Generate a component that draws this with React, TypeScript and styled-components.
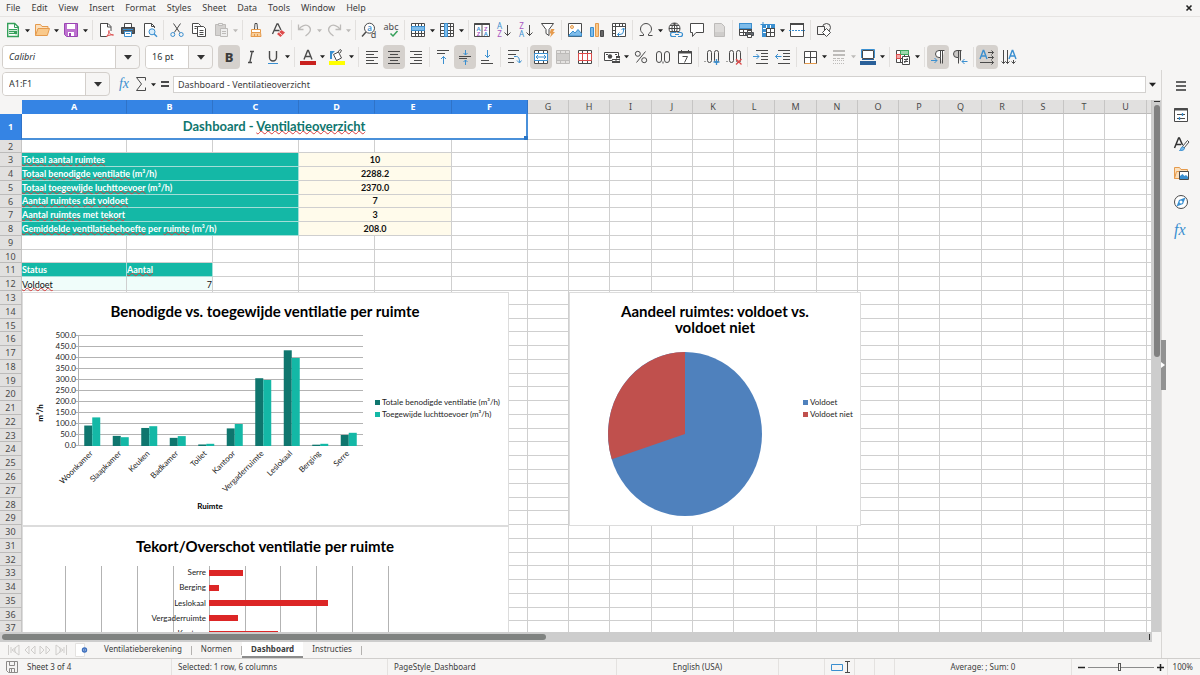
import React from "react";
import styled, { createGlobalStyle, css } from "styled-components";

const ink = "#4a4a4a";
const blue = "#3a8fd0";
const mute = "#bdbbb9";
const orange = "#e59a4c";
const red = "#dd4b4b";
const green = "#35a05a";
const purple = "#a855c0";
const uiFont = '"Noto Sans", "Open Sans", sans-serif';
const cellFont = 'Lato, "Noto Sans", sans-serif';

const GlobalStyle = createGlobalStyle`
  * { box-sizing: border-box; }
  body { margin: 0; background: #f6f5f4; color: #3c3c3c; font: 9px/12px ${uiFont}; }
  button, input { font: inherit; color: inherit; margin: 0; }
  button { border: 0; padding: 0; background: none; }
`;

/* ---------- icons ---------- */

const lines = (color: string, rows: number[][]) => (
  <path stroke={color} d={rows.map(([x, y, w]) => `M${x} ${y}.5h${w}`).join("")} />
);

const tableGrid = (color: string) => (
  <path stroke={color} d="M1.5 1.5h13v13h-13zM1.5 4.5h13M1.5 8.5h13M1.5 11.5h13M5.5 1.5v13M8.5 1.5v13M11.5 1.5v13" />
);

const glyph = (x: number, y: number, size: number, fill: string, char: string, weight = 400) => (
  <text x={x} y={y} fontSize={size} fill={fill} stroke="none" fontWeight={weight} textAnchor="middle" fontFamily="Noto Sans, sans-serif">
    {char}
  </text>
);

const icons: Record<string, React.ReactNode> = {
  new: (
    <>
      <path stroke={green} strokeWidth="1.4" fill="#fff" d="M2.7 1.5h7l3.6 3.6v9.4H2.7z" />
      <path stroke={green} d="M9.5 1.5v4h4" />
      <path fill={green} stroke="none" d="M4 7h8v5H4z" />
      <path stroke="#cdebd6" d="M4 8.5h8M4 10.5h5M10 12.5h2" />
    </>
  ),
  open: (
    <>
      <path stroke={orange} fill="#fbe0bd" d="M1.5 13.5v-11h5l1.5 2h6v3" />
      <path stroke={orange} fill="#f9c98b" d="M1.5 13.5l2.5-7h11.5l-2.2 7z" />
    </>
  ),
  save: (
    <>
      <path stroke="#9a44b3" fill="#bd72cf" d="M1.5 1.5h13v13h-11l-2-2z" />
      <path stroke="none" fill="#fff" d="M4 2h8v5H4zM5 10h6v4H5z" />
      <path stroke="none" fill="#9a44b3" d="M6 11h2v3H6z" />
    </>
  ),
  pdf: (
    <>
      <path stroke={ink} fill="#fff" d="M13 9V4.5l-3-3H2.5v13H9" />
      <path stroke={ink} d="M9.5 1.5v3.5h3.5" />
      <path stroke={red} d="M8.5 14.5c2-2 3-4.5 2.5-6-1.2 1 1 4.5 4.5 4.5-2-.6-5 .2-7 1.5z" />
    </>
  ),
  print: (
    <>
      <path stroke={ink} fill="#fff" d="M4.5 5V1.5h7V5" />
      <path stroke="#3f4347" fill="#53585d" d="M1.5 5.5h13v6h-13z" />
      <path stroke={blue} fill="#fff" d="M4.5 9.5h7v5h-7z" />
      <path stroke={blue} d="M6 11.5h4M3 7.5h10" />
    </>
  ),
  preview: (
    <>
      <path stroke={ink} fill="#fff" d="M12.5 6V4.5l-3-3h-7v13h5" />
      <path stroke={ink} d="M9.5 1.5v3h3" />
      <circle cx="10" cy="9.8" r="3" stroke={blue} fill="#d8ecfa" />
      <path stroke={blue} strokeWidth="1.4" d="M12.2 12l2.8 2.8" />
    </>
  ),
  cut: (
    <>
      <path stroke={ink} d="M4.5 1.5l6.2 9M11.5 1.5l-6.2 9" />
      <circle cx="3.8" cy="12.5" r="2" stroke={blue} />
      <circle cx="12.2" cy="12.5" r="2" stroke={blue} />
    </>
  ),
  copy: (
    <>
      <path stroke={ink} fill="#fff" d="M1.5 1.5h6l2 2v8h-8z" />
      <path stroke={ink} fill="#fff" d="M6.5 4.5h6l2 2v8h-8z" />
      <path stroke={ink} d="M8.5 8.5h4M8.5 10.5h4M8.5 12.5h4M3.5 4.5h3M3.5 6.5h2" />
    </>
  ),
  paste: (
    <>
      <path stroke={mute} fill="#d4d2d0" d="M2.5 2.5h10v11h-10z" />
      <path stroke={mute} fill="#eee" d="M5.5 1.5h4v2h-4zM7.5 6.5h7v8h-7z" />
      <path stroke={mute} d="M9 9.5h4M9 11.5h4" />
    </>
  ),
  clone: (
    <>
      <path stroke={ink} fill="#fff" d="M7 1.5h2l.5 6h-3z" />
      <path stroke={orange} fill="#fff" d="M3.5 7.5h9v3h-9z" />
      <path stroke={orange} fill="#f8cf9c" d="M3.5 10.5h9l.5 4h-10z" />
      <path stroke={orange} d="M6.5 12v2M9.5 12v2" />
    </>
  ),
  clear: (
    <>
      <path stroke={ink} strokeWidth="1.3" d="M2.5 12L7 2h1l3 6M4.500 8.500h5" />
      <path stroke="none" fill={red} d="M7 12l4.500-4 3.500 2.500-4.500 4.500z" />
      <path stroke="#fff" strokeWidth=".8" d="M9 10.300l3.300 2.800" />
    </>
  ),
  undo: <path stroke={mute} strokeWidth="1.3" d="M1.5 2.5v5h5M2 7.2C4 4 9 1.5 12 4.5s1 6.5-3.500 9.500" />,
  redo: <path stroke={mute} strokeWidth="1.3" d="M14.5 2.5v5h-5M14 7.2C12 4 7 1.5 4 4.5s-1 6.500 3.500 9.500" />,
  find: (
    <>
      <circle cx="8.5" cy="6.2" r="5" stroke={ink} fill="#fff" />
      <path stroke={ink} strokeWidth="1.4" d="M5 10l-4 4.5" />
      {glyph(8.5, 9, 8, blue, "a", 600)}
      {glyph(12.5, 15.5, 9, ink, "d")}
    </>
  ),
  spell: (
    <>
      {glyph(8, 8, 9, ink, "abc")}
      <path stroke={green} strokeWidth="1.5" d="M7.5 11.5l2.500 2.500 4.500-5" />
    </>
  ),
  rows: (
    <>
      <path fill="#fff" stroke="none" d="M1 1h14v14H1z" />
      {tableGrid(ink)}
      <path fill="#7ebcea" stroke={blue} d="M1.5 4.5h13v4h-13z" />
    </>
  ),
  cols: (
    <>
      <path fill="#fff" stroke="none" d="M1 1h14v14H1z" />
      {tableGrid(ink)}
      <path fill="#7ebcea" stroke={blue} d="M5.5 1.5h3v13h-3z" />
    </>
  ),
  sort: (
    <>
      <path stroke={ink} fill="#fff" d="M.5 1.5h15v13H.5zM8 3v12" />
      <path stroke={ink} strokeWidth="2" d="M.5 2h15" />
      {glyph(4.5, 8.6, 6, blue, "A", 600)}
      {glyph(4.5, 14, 6, purple, "Z", 600)}
      {glyph(11.8, 8.6, 6, purple, "Z", 600)}
      {glyph(11.8, 14, 6, blue, "A", 600)}
    </>
  ),
  asc: (
    <>
      {glyph(3.5, 7, 8, blue, "A")}
      {glyph(3.5, 15, 8, purple, "Z")}
      <path stroke={ink} d="M11.5 3v10.5M8.5 10.5l3 3 3-3" />
    </>
  ),
  desc: (
    <>
      {glyph(3.5, 7, 8, purple, "Z")}
      {glyph(3.5, 15, 8, blue, "A")}
      <path stroke={ink} d="M11.5 3v10.5M8.5 10.5l3 3 3-3" />
    </>
  ),
  filter: (
    <>
      <path stroke={ink} fill="#fff" d="M1.5 1.5h12l-4.500 6v6l-3-2v-4z" />
      <path stroke="none" fill={orange} d="M11 7h3.5l-1.5 3h2l-5 5.5 1.2-4H9.5z" />
    </>
  ),
  image: (
    <>
      <path stroke={ink} fill="#fff" d="M1.5 1.5h13v13h-13z" />
      <path stroke={blue} fill="#7ebcea" d="M2 13l4-4 2 2 3-3.500 3.500 4V14H2z" />
      <circle cx="5" cy="5" r="1.5" stroke={orange} fill="#fbe0bd" />
    </>
  ),
  chart: (
    <>
      <path stroke={blue} fill="#7ebcea" d="M1.5 5.5h3v9h-3z" />
      <path stroke={orange} fill="#f9c98b" d="M6.5 1.5h3v13h-3z" />
      <path stroke={ink} fill="#666" d="M11.5 8.5h3v6h-3z" />
    </>
  ),
  pivot: (
    <>
      <path stroke={ink} fill="#fff" d="M1.5 1.5h13v13h-13z" />
      <path stroke={ink} d="M1.5 4.5h13M4.5 1.5v13M8.5 1.5v3M11.5 1.5v3M1.5 8.5h3M1.5 11.5h3" />
      <path stroke={blue} d="M12.5 6v3a3.5 3.5 0 0 1-3.5 3.5H6.5M10.5 8l2-2 2 2M8.5 10.5l-2 2 2 2" />
    </>
  ),
  omega: <path stroke={ink} d="M1.5 13.5h4v-1.5C3.5 10.5 2.500 9 2.500 7a5.500 5.500 0 0 1 11 0c0 2-1 3.500-3 5v1.500h4" />,
  link: (
    <>
      <circle cx="7.5" cy="6.5" r="5.5" stroke={ink} fill="#fff" />
      <path stroke={ink} d="M2 6.5h11M3 3.5h9M3 9.5h9M7.5 1v11M7.5 1c-3.5 3-3.5 8 0 11M7.5 1c3.5 3 3.5 8 0 11" />
      <path stroke="#f6f5f4" strokeWidth="3" d="M4 12.5h12" />
      <path stroke={blue} strokeWidth="1.2" d="M9 10.500H5.500a1.500 1.500 0 0 0 0 4H9M11 10.500h2.500a1.500 1.500 0 0 1 0 4H11M8 12.500h4" />
    </>
  ),
  comment: <path stroke={ink} fill="#fff" d="M1.5 1.5h13v9H7l-3.5 4v-4h-2z" />,
  footer: (
    <>
      <path stroke={mute} fill="#dddbd9" d="M3.5 1.5h7l3 3v10h-10z" />
      <path stroke="none" fill="#cfcdcb" d="M4 10h9v4H4z" />
    </>
  ),
  printArea: (
    <>
      <path fill="#fff" stroke="none" d="M1 1h13v13H1z" />
      <path stroke={ink} d="M1.5 1.5h12v12h-12zM1.5 4.5h12M1.5 7.5h12M1.5 10.5h12M5.5 1.5v12M9.5 1.5v12" />
      <path stroke={blue} fill="#7ebcea" d="M1.5 1.5h12v5h-12z" />
      <path stroke="#4a4f54" fill="#62686e" d="M7.5 10.5h8v3h-8z" />
      <path stroke={ink} fill="#fff" d="M9.5 8.5h4v2h-4zM9.5 12.5h4v3h-4z" />
    </>
  ),
  freeze: (
    <>
      <path fill="#fff" stroke="none" d="M3 3h12v12H3z" />
      <path stroke={ink} d="M2.5 2.5h12v12h-12zM2.5 6.5h12M2.5 10.5h12M6.5 2.5v12M10.5 2.5v12" />
      <path stroke="none" fill={blue} d="M2 2h13v4H2zM2 2h4v13H2z" />
      <path stroke="#fff" d="M3 6.5h3M3 10.5h3M6.5 3v3M10.5 3v3" />
      <path stroke={blue} d="M3 0v5M.5 2.5h5" />
    </>
  ),
  split: (
    <>
      <path stroke={ink} fill="#fff" d="M1.5 1.5h13v13h-13z" />
      <path stroke={ink} strokeWidth="2" d="M1 2h14" />
      <path stroke={blue} strokeDasharray="2 1" d="M0 8.5h16" />
    </>
  ),
  shapes: (
    <>
      <circle cx="10.5" cy="5.5" r="4" stroke={ink} />
      <path stroke={ink} fill="#f6f5f4" d="M1.5 4.5h7v8h-7z" />
      <path stroke={ink} fill="#fff" d="M10.5 6.5l4 4-4 4-4-4z" />
    </>
  ),
  bold: glyph(8, 12.5, 13, "#3c3c3c", "B", 800),
  italic: <path stroke={ink} strokeWidth="1.3" d="M7 2.5h4M5 13.5h4M9.2 2.5l-2.4 11" />,
  underline: (
    <>
      <path stroke={ink} strokeWidth="1.4" d="M4.5 2v6.5a3.5 3.5 0 0 0 7 0V2" />
      <path stroke={blue} d="M3 14.5h10" />
    </>
  ),
  fontColor: (
    <>
      <path stroke={ink} strokeWidth="1.4" d="M4 10.5L7.6 1.5h.8l3.6 9M5.2 7.5h5.6" />
      <path stroke="none" fill="#c9211e" d="M0 12h16v4H0z" />
    </>
  ),
  highlight: (
    <>
      <path stroke={ink} fill="#fff" d="M4.5 5.5l5-2.5 3 6-5 2.5zM9 3l2-2.5 1.5 1L11 4" />
      <path stroke="none" fill={blue} d="M1 2h5L3 5v5H1z" />
      <path stroke="none" fill="#ff0" d="M0 12h16v4H0z" />
    </>
  ),
  left: lines(ink, [[2, 2, 12], [2, 5, 8], [2, 8, 12], [2, 11, 8], [2, 14, 12]]),
  center: lines(ink, [[2, 2, 12], [4, 5, 8], [2, 8, 12], [4, 11, 8], [2, 14, 12]]),
  right: lines(ink, [[2, 2, 12], [6, 5, 8], [2, 8, 12], [6, 11, 8], [2, 14, 12]]),
  top: (
    <>
      {lines(ink, [[2, 1, 12], [2, 4, 8]])}
      <path stroke={blue} d="M8.5 15V7.5M6 10l2.5-2.5L11 10" />
    </>
  ),
  middle: (
    <>
      {lines(ink, [[2, 7, 12], [2, 9, 8]])}
      <path stroke={blue} d="M8.5 1v5M6.5 4l2 2 2-2M8.5 16v-5M6.5 13l2-2 2 2" />
    </>
  ),
  bottom: (
    <>
      {lines(ink, [[2, 11, 8], [2, 14, 12]])}
      <path stroke={blue} d="M8.5 1v7.5M6 6l2.5 2.5L11 6" />
    </>
  ),
  wrap: (
    <>
      {lines(ink, [[2, 1, 11], [2, 5, 8], [2, 9, 6], [2, 13, 6]])}
      <path stroke={blue} d="M8 7.5h2.5c2 0 3 2 3 6M11 11.5l2.5 2.5 2-2.5" />
    </>
  ),
  mergeCenter: (
    <>
      <path fill="#fff" stroke="none" d="M1 1h14v14H1z" />
      <path stroke={ink} d="M1.5 1.5h13v13h-13zM1.5 4.5h13M1.5 11.5h13M5.5 1.5v3M10.5 1.5v3M5.5 11.5v3M10.5 11.5v3" />
      <path stroke={blue} fill="#fff" d="M1.5 4.5h13v7h-13z" />
      <path stroke={blue} d="M3 8h10M5 6L3 8l2 2M11 6l2 2-2 2" />
    </>
  ),
  merge: (
    <>
      <path stroke={mute} fill="#e4e2e0" d="M1.5 1.5h13v13h-13z" />
      <path stroke={mute} fill="#d0cecc" d="M1.5 4.5h13v7h-13z" />
      <path stroke={mute} d="M5.5 1.5v3M10.5 1.5v3M5.5 11.5v3M10.5 11.5v3" />
    </>
  ),
  unmerge: (
    <>
      <path stroke={ink} fill="#fff" d="M1.5 1.5h13v13h-13zM5.5 1.5v3M10.5 1.5v3M5.5 11.5v3M10.5 11.5v3" />
      <path stroke={red} fill="#fff" d="M1.5 4.5h13v7h-13zM5.5 4.5v7M10.5 4.5v7" />
    </>
  ),
  currency: (
    <>
      <path stroke={ink} fill="#fff" d="M.5 3.5h14v8H.5z" />
      <circle cx="6" cy="7.5" r="2.2" fill={ink} stroke="none" />
      <path stroke="none" fill={ink} d="M8 10h4v4H8zM12 7h4v7h-4zM2 5h2v1H2zM11 5h2v1h-2z" />
      <path stroke="#fff" d="M8.5 11.5h3M12.5 9.5h3M12.5 11.5h3" />
    </>
  ),
  percent: (
    <>
      <circle cx="4.8" cy="4.8" r="2.5" stroke={ink} />
      <circle cx="11.2" cy="11.2" r="2.5" stroke={ink} />
      <path stroke={ink} d="M12.5 2.5l-9 11" />
    </>
  ),
  number: (
    <>
      <rect x="1.5" y="2.5" width="5" height="11" rx="2.5" stroke={ink} />
      <rect x="9.5" y="2.5" width="5" height="11" rx="2.5" stroke={ink} />
      <path stroke={ink} d="M8 12.5v2" />
    </>
  ),
  date: (
    <>
      <path stroke={ink} fill="#fff" d="M1.5 2.5h13v12h-13z" />
      <path stroke={ink} strokeWidth="2" d="M1 3.5h14" />
      <path stroke={ink} d="M4.5 1v3M11.5 1v3M5.5 7.5h5l-3 6" />
    </>
  ),
  decAdd: (
    <>
      <rect x="3.5" y="1.5" width="4" height="12" rx="2" stroke={ink} />
      <rect x="10.5" y="1.5" width="4" height="12" rx="2" stroke={ink} />
      <path stroke={ink} d="M.5 12.500h1" />
      <path stroke={blue} strokeWidth="1.3" d="M12.5 10v6M9.5 13h6" />
    </>
  ),
  decDel: (
    <>
      <rect x="3.5" y="1.5" width="4" height="12" rx="2" stroke={ink} />
      <rect x="10.5" y="1.5" width="4" height="12" rx="2" stroke={ink} />
      <path stroke={ink} d="M.5 12.500h1" />
      <path stroke={red} strokeWidth="1.3" d="M10 10l5.5 5.5M15.500 10L10 15.500" />
    </>
  ),
  indent: (
    <>
      {lines(ink, [[3, 1, 12], [8, 4, 7], [8, 7, 7], [8, 10, 7], [3, 14, 12]])}
      <path stroke={blue} d="M0 7.5h6M3.5 5L6 7.5 3.5 10" />
    </>
  ),
  outdent: (
    <>
      {lines(ink, [[3, 1, 12], [8, 4, 7], [8, 7, 7], [8, 10, 7], [3, 14, 12]])}
      <path stroke={blue} d="M.5 7.5h6M3 5L.5 7.5 3 10" />
    </>
  ),
  borders: (
    <>
      <path stroke={ink} fill="#fff" d="M2.5 2.5h12v12h-12z" />
      <path stroke={ink} d="M3 8.5h11M8.5 3v11" />
      <path stroke={orange} d="M2.5 14.5h12" />
    </>
  ),
  lineStyle: (
    <>
      <path stroke={mute} strokeWidth="2" d="M2 2h12M2 6h12" />
      <path stroke={mute} strokeDasharray="3 1" d="M2 9.5h12" />
      <path stroke={mute} strokeDasharray="1 1" d="M2 11.5h12M2 14.5h12" />
    </>
  ),
  lineColor: (
    <>
      <path stroke={ink} fill="#fff" d="M2.5 1.5h11v8h-11z" />
      <path stroke={blue} d="M1.5 9V.5h13V9" />
      <path stroke="none" fill="#2a6099" d="M0 12h16v4H0zM2 10h12v1H2z" />
    </>
  ),
  conditional: (
    <>
      <path stroke={ink} fill="#fff" d="M1.5 1.5h12v12h-12zM1.5 5.5h12M1.5 9.5h12M5.5 1.5v12M9.5 1.5v12" />
      <path stroke="#3fa860" fill="#9fd8ae" d="M5.5 1.5h8v4h-8z" />
      <path stroke={red} fill="#f3a8a8" d="M1.5 5.5h4v4h-4z" />
      <path stroke={ink} fill="#fff" d="M7.5 7.5h7v8h-7z" />
      <path stroke={ink} d="M9 10.5h4M9 12.5h4M12.500 9l-3 5" />
    </>
  ),
  ltr: (
    <>
      <path stroke={ink} fill="#fff" d="M14.5 1.5H9a3.5 3.5 0 0 0 0 7h1.5v6M10.5 1.5v7M12.5 1.5v13" />
      <path stroke={blue} d="M1 11.5h6M4.5 9L7 11.5 4.5 14" />
    </>
  ),
  rtl: (
    <>
      <path stroke={ink} fill="#c9c7c5" d="M9.5 1.5H5a3.5 3.5 0 0 0 0 7h1.5v6M6.5 1.5v7M8.5 1.5v10" />
      <path stroke={blue} d="M10 12.5h5.5M12.5 10L10 12.5l2.5 2.5" />
    </>
  ),
  textLtr: (
    <>
      <path stroke={blue} strokeWidth="1.4" d="M1 10L4.2 1.5h.6L8 10M2.2 7h4.8" />
      <path stroke={ink} d="M9 3.5h5.5M12.5 1.5l2 2-2 2M9 8.5h5.5M12.5 6.5l2 2-2 2M1 13.5h13.5M12.5 11.5l2 2-2 2" />
    </>
  ),
  textTtb: (
    <>
      <path stroke={blue} strokeWidth="1.4" d="M8 10l3.2-8.5h.6L15 10M9.2 7h4.8" />
      <path stroke={ink} d="M2.5 1v13.5M.5 12.5l2 2 2-2M6.5 1v13.5M4.5 12.5l2 2 2-2M12.5 11v3.5M10.5 12.5l2 2 2-2" />
    </>
  ),
  sigma: <path stroke={ink} d="M12.5 4.5v-3h-9l5 6.5-5 6.5h9v-3" />,
  equals: <path stroke={ink} strokeWidth="2" d="M4 6h8M4 10h8" />,
  menu: <path stroke="#333" strokeWidth="1.6" d="M3 4h10M3 8h10M3 12h10" />,
  properties: (
    <>
      <path stroke={ink} fill="#fff" d="M1.5 1.5h13v13h-13z" />
      <path stroke={ink} strokeWidth="2" d="M1 2.5h14" />
      <path stroke={ink} d="M4 7.5h8M4 11.5h8" />
      <path stroke={blue} strokeWidth="1.3" d="M9.5 6v3M6.5 10v3" />
    </>
  ),
  styles: (
    <>
      <path stroke="#333" strokeWidth="1.5" d="M1.5 12L5.6 2h.8L9.5 9M3 8.5h5" />
      <path stroke={ink} fill="#fff" d="M14.5 4.5l-5 6 1.5 1.5 5-6z" />
      <path stroke={blue} fill="#7ebcea" d="M6.5 14.5c1.5-.5 1-3.5 3-3.5s2.5 1.5 1.5 2.5-3 1-4.500 1z" />
    </>
  ),
  gallery: (
    <>
      <path stroke={orange} fill="#fbe0bd" d="M1.5 13.5v-11h5l1.5 2h6.5v9z" />
      <path stroke={orange} d="M1.5 13.5l2-7h11" />
      <path stroke={ink} fill="#fff" d="M6.5 6.5h9v8h-9z" />
      <path stroke="none" fill={blue} d="M7 14v-3l2.5-2 2 2 1.5-1 2 2v2z" />
    </>
  ),
  navigator: (
    <>
      <circle cx="8" cy="8" r="6.5" stroke={ink} fill="#fff" />
      <path stroke="none" fill={blue} d="M12.500 3.500l-2.500 6.500-6.500 2.500 2.500-6.500z" />
      <circle cx="8" cy="8" r="1.5" stroke="none" fill="#fff" />
    </>
  ),
  statusSave: (
    <>
      <path stroke="#8c8a88" d="M2.5 2.5h11v11h-9l-2-2z" />
      <path stroke="#8c8a88" d="M5.5 2.5v4h5v-4M5.5 13.5v-4h5v4M7.5 10v3" />
    </>
  ),
  addSheet: (
    <>
      <path stroke="#e4e2e0" fill="#fff" d="M2.5 1.5h9v13h-9z" />
      <circle cx="11.5" cy="8" r="2" stroke="#3c6fbe" strokeWidth="1.4" fill="#fff" />
      <path stroke="#3c6fbe" strokeWidth=".8" d="M11.5 6.500v3M10 8h3" />
    </>
  ),
};

const Svg = styled.svg`
  display: block;
  flex: none;
  fill: none;
  overflow: visible;
`;

const Icon = ({ name }: { name: string }) => (
  <Svg width="16" height="16" viewBox="0 0 16 16" aria-hidden="true">
    {icons[name]}
  </Svg>
);

const Caret = ({ size = 6, color = "#222" }: { size?: number; color?: string }) => (
  <Svg width={size} height={size} viewBox="0 0 6 6" aria-hidden="true">
    <path d="M0 1.5h6L3 5z" fill={color} />
  </Svg>
);

const FxIcon = ({ size = 16 }: { size?: number }) => (
  <Svg width={size} height={size} viewBox="0 0 16 16" aria-hidden="true">
    <text x="1" y="12" fontSize="16" fontStyle="italic" fontFamily="Liberation Serif, serif" fill={blue}>
      fx
    </text>
  </Svg>
);

/* ---------- frame ---------- */

const Window = styled.div`
  display: flex;
  flex-direction: column;
  height: 100vh;
  overflow: hidden;
`;

const MenuBar = styled.nav`
  display: flex;
  align-items: center;
  gap: 11px;
  height: 17px;
  padding: 0 6px;
  border-bottom: 1px solid #e6e4e2;
`;

const CloseButton = styled.button`
  display: flex;
  margin-left: auto;
  padding: 2px;
`;

const Toolbar = styled.div`
  display: flex;
  align-items: center;
  height: 26px;
  padding: 0 2px;
`;

const Separator = styled.span`
  flex: none;
  width: 1px;
  height: 20px;
  margin: 0 2px;
  background: #e2e0de;
`;

const ToolButton = styled.button<{ $pressed?: boolean }>`
  display: flex;
  flex: none;
  align-items: center;
  justify-content: center;
  width: 22px;
  height: 24px;
  border-radius: 4px;
  background: ${(p) => (p.$pressed ? "#d5d1cd" : "transparent")};
`;

const DropButton = styled.button`
  display: flex;
  flex: none;
  align-items: center;
  justify-content: center;
  width: 7px;
  height: 24px;
  & + ${Separator} {
    margin-left: 3px;
  }
`;

const Combo = styled.div<{ $width: number }>`
  display: flex;
  flex: none;
  width: ${(p) => p.$width}px;
  height: 24px;
  border: 1px solid #d3cfcb;
  border-radius: 4px;
  overflow: hidden;
`;

const ComboInput = styled.input<{ $italic?: boolean }>`
  flex: 1;
  min-width: 0;
  padding: 0 6px;
  border: 0;
  border-right: 1px solid #d3cfcb;
  background: #fff;
  color: #2e3436;
  font-style: ${(p) => (p.$italic ? "italic" : "normal")};
`;

const ComboArrow = styled.button`
  display: flex;
  align-items: center;
  justify-content: center;
  width: 23px;
`;

type Tool = { icon: string; label: string; pressed?: boolean; drop?: boolean; muted?: boolean } | "|";

/* Flags: p = pressed, d = has a drop-down, m = its arrow is greyed out. */
const t = (icon: string, label: string, flags = ""): Tool => ({
  icon,
  label,
  pressed: flags.includes("p"),
  drop: flags.includes("d"),
  muted: flags.includes("m"),
});

const standardTools: Tool[] = [
  t("new", "New", "d"), t("open", "Open", "d"), t("save", "Save", "d"), "|",
  t("pdf", "Export as PDF"), t("print", "Print"), t("preview", "Print Preview"), "|",
  t("cut", "Cut"), t("copy", "Copy"), t("paste", "Paste", "dm"), "|",
  t("clone", "Clone Formatting"), t("clear", "Clear Formatting"), "|",
  t("undo", "Undo", "dm"), t("redo", "Redo", "dm"), "|",
  t("find", "Find and Replace"), t("spell", "Spelling"), "|",
  t("rows", "Row", "d"), t("cols", "Column", "d"), "|",
  t("sort", "Sort"), t("asc", "Sort Ascending"), t("desc", "Sort Descending"), t("filter", "AutoFilter"), "|",
  t("image", "Insert Image"), t("chart", "Insert Chart"), t("pivot", "Pivot Table"), "|",
  t("omega", "Special Character", "d"), t("link", "Hyperlink"), t("comment", "Comment"), t("footer", "Headers and Footers"), "|",
  t("printArea", "Define Print Area"), t("freeze", "Freeze Rows and Columns", "d"), t("split", "Split Window"), "|",
  t("shapes", "Show Draw Functions"),
];

const formatTools: Tool[] = [
  t("bold", "Bold", "p"), t("italic", "Italic"), t("underline", "Underline", "d"), "|",
  t("fontColor", "Font Color", "d"), t("highlight", "Background Color", "d"), "|",
  t("left", "Align Left"), t("center", "Center Horizontally", "p"), t("right", "Align Right"), "|",
  t("top", "Align Top"), t("middle", "Center Vertically", "p"), t("bottom", "Align Bottom"), "|",
  t("wrap", "Wrap Text"), "|",
  t("mergeCenter", "Merge and Center", "p"), t("merge", "Merge Cells"), t("unmerge", "Unmerge Cells"), "|",
  t("currency", "Currency", "d"), t("percent", "Percent"), t("number", "Number"), t("date", "Date"), "|",
  t("decAdd", "Add Decimal Place"), t("decDel", "Delete Decimal Place"), "|",
  t("indent", "Increase Indent"), t("outdent", "Decrease Indent"), "|",
  t("borders", "Borders", "d"), t("lineStyle", "Border Style", "dm"), t("lineColor", "Border Color", "d"), "|",
  t("conditional", "Conditional", "d"), "|",
  t("ltr", "Left-To-Right", "p"), t("rtl", "Right-To-Left"), "|",
  t("textLtr", "Text direction left to right", "p"), t("textTtb", "Text direction top to bottom"),
];

const Tools = ({ items }: { items: Tool[] }) => (
  <>
    {items.map((item, i) =>
      item === "|" ? (
        <Separator key={i} />
      ) : (
        <React.Fragment key={i}>
          <ToolButton $pressed={item.pressed} aria-label={item.label} aria-pressed={item.pressed}>
            <Icon name={item.icon} />
          </ToolButton>
          {item.drop && (
            <DropButton aria-label={`${item.label} options`}>
              <Caret size={5} color={item.muted ? mute : "#222"} />
            </DropButton>
          )}
        </React.Fragment>
      ),
    )}
  </>
);

const ComboBox = ({ label, value, width, italic }: { label: string; value: string; width: number; italic?: boolean }) => (
  <Combo $width={width}>
    <ComboInput aria-label={label} defaultValue={value} $italic={italic} />
    <ComboArrow aria-label={`${label} list`}>
      <Caret size={8} color="#333" />
    </ComboArrow>
  </Combo>
);

const FormatBar = styled(Toolbar)`
  gap: 5px;
  height: 27px;
`;

const ToolRun = styled.div`
  display: flex;
  align-items: center;
`;

const Body = styled.div`
  display: flex;
  flex: 1;
  min-height: 0;
`;

const Main = styled.main`
  display: flex;
  flex: 1;
  flex-direction: column;
  min-width: 0;
`;

const FormulaBar = styled.div`
  display: flex;
  align-items: center;
  height: 30px;
  padding: 0 3px 2px 2px;
`;

const FormulaTools = styled.div`
  display: flex;
  align-items: center;
  margin-left: 7px;
`;

const SlimButton = styled.button<{ $width: number }>`
  display: flex;
  align-items: center;
  justify-content: center;
  width: ${(p) => p.$width}px;
  height: 20px;
`;

const FormulaInput = styled.input`
  flex: 1;
  min-width: 0;
  height: 17px;
  padding: 0 4px;
  border: 1px solid #d3d1cf;
  background: #fff;
`;

/* ---------- sheet ---------- */

const SheetArea = styled.div`
  display: flex;
  flex: 1;
  min-height: 0;
`;

const Grid = styled.div`
  position: relative;
  flex: 1;
  min-width: 0;
  overflow: hidden;
  background: #fff;
`;

const SheetTable = styled.table`
  width: 100%;
  table-layout: fixed;
  border-collapse: separate;
  border-spacing: 0;
`;

const Row = styled.tr<{ $height: number }>`
  height: ${(p) => p.$height}px;
`;

const HeadCell = styled.th<{ $selected?: boolean }>`
  padding: 0;
  overflow: hidden;
  border-right: 1px solid ${(p) => (p.$selected ? "#2f73c8" : "#c6c5c4")};
  border-bottom: 1px solid ${(p) => (p.$selected ? "#3584e4" : "#bcbbba")};
  background: ${(p) => (p.$selected ? "#3584e4" : "#e1e0df")};
  color: ${(p) => (p.$selected ? "#fff" : "#4a4a4a")};
  font-size: 9px;
  line-height: 10px;
  font-weight: ${(p) => (p.$selected ? 700 : 400)};
`;

const RowHead = styled(HeadCell)`
  padding-top: 1px;
`;

const Corner = styled(HeadCell)`
  border: 0;
  background: #f6f5f4;
`;

type Kind = "plain" | "title" | "label" | "value" | "data" | "number";

const kinds: Record<Kind, ReturnType<typeof css>> = {
  plain: css``,
  title: css`
    position: relative;
    border-right: 2px solid #4a90d9;
    border-bottom: 2px solid #4a90d9;
    color: #0f766e;
    font-size: 13px;
    line-height: 16px;
    font-weight: 700;
    text-align: center;
  `,
  label: css`
    border-color: #a3ded7;
    background: #14b8a6;
    color: #fff;
    font-weight: 700;
  `,
  value: css`
    background: #fffbeb;
    color: #111;
    font-weight: 700;
    text-align: center;
  `,
  data: css`
    padding-top: 2px;
    background: #f0fdfa;
    color: #111;
  `,
  number: css`
    padding-top: 2px;
    background: #f0fdfa;
    color: #111;
    text-align: right;
  `,
};

const Cell = styled.td<{ $kind?: Kind }>`
  padding: 0;
  border-right: 1px solid #cfcfcf;
  border-bottom: 1px solid #cfcfcf;
  font: 9px/10px ${cellFont};
  white-space: nowrap;
  ${(p) => kinds[p.$kind ?? "plain"]}
`;

const Misspelled = styled.span`
  text-decoration: underline wavy #d83a3a 1px;
  text-decoration-skip-ink: none;
  text-underline-offset: -1px;
`;

const FillHandle = styled.span`
  position: absolute;
  right: -2px;
  bottom: -2px;
  width: 4px;
  height: 4px;
  background: #2a76c6;
`;

const headWidth = 22;
const columns: [string, number][] = [
  ["A", 105], ["B", 86], ["C", 86], ["D", 76], ["E", 77], ["F", 76], ["G", 41],
  ..."HIJKLMNOPQRSTU".split("").map((c, i): [string, number] => [c, i % 4 === 1 ? 42 : 41]),
];

/* Rows share a zoomed height, rounded to whole pixels at each boundary. */
const rowEnd = (n: number) => Math.round(139.5 + 13.77 * (n - 1)) - 100;
const rowHeight = (n: number) => (n === 1 ? 26 : rowEnd(n) - rowEnd(n - 1));

type CellSpec = { span: number; kind: Kind; text: string };

/* Words wrapped in underscores are marked by the spell checker. */
const summary = (label: string, value: string): CellSpec[] => [
  { span: 3, kind: "label", text: label },
  { span: 2, kind: "value", text: value },
];

const content: Record<number, CellSpec[]> = {
  1: [{ span: 6, kind: "title", text: "Dashboard - _Ventilatieoverzicht_" }],
  3: summary("_Totaal_ _aantal_ _ruimtes_", "10"),
  4: summary("_Totaal_ _benodigde_ _ventilatie_ (m³/h)", "2288.2"),
  5: summary("_Totaal_ _toegewijde_ _luchttoevoer_ (m³/h)", "2370.0"),
  6: summary("_Aantal_ _ruimtes_ _dat_ _voldoet_", "7"),
  7: summary("_Aantal_ _ruimtes_ met _tekort_", "3"),
  8: summary("_Gemiddelde_ _ventilatiebehoefte_ per _ruimte_ (m³/h)", "208.0"),
  11: [
    { span: 1, kind: "label", text: "Status" },
    { span: 1, kind: "label", text: "_Aantal_" },
  ],
  12: [
    { span: 1, kind: "data", text: "_Voldoet_" },
    { span: 1, kind: "number", text: "7" },
  ],
};

const CellText = ({ text }: { text: string }) => (
  <>{text.split("_").map((part, i) => (i % 2 ? <Misspelled key={i}>{part}</Misspelled> : part))}</>
);

const SheetRow = ({ n }: { n: number }) => {
  const cells = content[n] ?? [];
  const used = cells.reduce((sum, c) => sum + c.span, 0);
  return (
    <Row $height={rowHeight(n)}>
      <RowHead scope="row" $selected={n === 1}>{n}</RowHead>
      {cells.map((c, i) => (
        <Cell key={i} colSpan={c.span} $kind={c.kind}>
          <CellText text={c.text} />
          {c.kind === "title" && <FillHandle />}
        </Cell>
      ))}
      {columns.slice(used).map(([name]) => (
        <Cell key={name} />
      ))}
      <Cell />
    </Row>
  );
};

/* ---------- charts ---------- */

const ChartObject = styled.figure<{ $x: number; $y: number }>`
  position: absolute;
  left: ${(p) => p.$x}px;
  top: ${(p) => p.$y}px;
  margin: 0;
  border: 1px solid #dcdcdc;
  background: #fff;
`;

const ChartSvg = styled.svg`
  display: block;
  font-family: ${cellFont};
  font-size: 8px;
  fill: #1c1c1c;
`;

const ChartTitle = styled.text`
  font-size: 15px;
  font-weight: 700;
  text-anchor: middle;
  fill: #000;
`;

const AxisTitle = styled.text`
  font-weight: 700;
  text-anchor: middle;
  fill: #000;
`;

const Legend = ({ x, items }: { x: number; items: [string, string][] }) => (
  <g>
    {items.map(([color, name], i) => (
      <g key={name}>
        <rect x={x} y={107 + i * 12} width="5" height="5" fill={color} />
        <text x={x + 7} y={112 + i * 12}>{name}</text>
      </g>
    ))}
  </g>
);

const rooms: [string, number, number][] = [
  ["Woonkamer", 93, 130], ["Slaapkamer", 46, 40], ["Keuken", 82, 90], ["Badkamer", 37, 45], ["Toilet", 7, 10],
  ["Kantoor", 80, 100], ["Vergaderruimte", 308, 300], ["Leslokaal", 435, 400], ["Berging", 6, 10], ["Serre", 50, 60],
];

const ColumnChart = () => {
  const left = 55;
  const base = 153;
  const pitch = 28.5;
  const scale = 110 / 500;
  return (
    <ChartSvg width="485" height="232" viewBox="0 0 485 232" role="img" aria-label="Benodigde vs. toegewijde ventilatie per ruimte">
      <ChartTitle x="242" y="24">Benodigde vs. toegewijde ventilatie per ruimte</ChartTitle>
      {Array.from({ length: 11 }, (_, i) => (
        <g key={i}>
          <path stroke="#b3b3b3" d={`M${left - 2} ${base - i * 11 - 0.5}H340`} />
          <text x="53" y={base - i * 11 + 2} textAnchor="end">{(i * 50).toFixed(1)}</text>
        </g>
      ))}
      <path stroke="#b3b3b3" d={`M${left + 0.5} 42V${base}`} />
      {rooms.map(([name, need, given], i) => {
        const mid = left + pitch * (i + 0.5);
        return (
          <g key={name}>
            <rect x={mid - 8} y={base - need * scale} width="8" height={need * scale} fill="#0f766e" />
            <rect x={mid} y={base - given * scale} width="8" height={given * scale} fill="#14b8a6" />
            <text textAnchor="end" transform={`translate(${mid + 1} 161) rotate(-45)`}>{name}</text>
          </g>
        );
      })}
      <AxisTitle transform="translate(20 120) rotate(-90)">m³/h</AxisTitle>
      <AxisTitle x="187" y="216">Ruimte</AxisTitle>
      <Legend x={352} items={[["#0f766e", "Totale benodigde ventilatie (m³/h)"], ["#14b8a6", "Toegewijde luchttoevoer (m³/h)"]]} />
    </ChartSvg>
  );
};

const PieChart = () => (
  <ChartSvg width="290" height="232" viewBox="0 0 290 232" role="img" aria-label="Aandeel ruimtes: voldoet vs. voldoet niet">
    <ChartTitle x="145" y="24">Aandeel ruimtes: voldoet vs.</ChartTitle>
    <ChartTitle x="145" y="40">voldoet niet</ChartTitle>
    <ellipse cx="115" cy="141" rx="77" ry="82" fill="#4f81bd" />
    <path d="M115 141V59A77 82 0 0 0 41.8 166.300z" fill="#c0504d" />
    <Legend x={233} items={[["#4f81bd", "Voldoet"], ["#c0504d", "Voldoet niet"]]} />
  </ChartSvg>
);

const differences: [string, number][] = [
  ["Serre", 34], ["Berging", 10], ["Leslokaal", 119], ["Vergaderruimte", 29], ["Kantoor", 69],
];

const BarChart = () => (
  <ChartSvg width="485" height="232" viewBox="0 0 485 232" role="img" aria-label="Tekort/Overschot ventilatie per ruimte">
    <ChartTitle x="242" y="25">Tekort/Overschot ventilatie per ruimte</ChartTitle>
    {Array.from({ length: 10 }, (_, i) => (
      <path key={i} stroke="#b3b3b3" d={`M${Math.round(42 + i * 35.9) + 0.5} 39V200`} />
    ))}
    {differences.map(([name, length], i) => (
      <g key={name}>
        <rect x="186" y={Math.round(42.5 + i * 15.3)} width={length} height="6" fill="#dc2626" />
        <text x="183" y={48 + i * 15.3} textAnchor="end">{name}</text>
      </g>
    ))}
  </ChartSvg>
);

/* ---------- scrollbars, tabs, status ---------- */

const VerticalTrack = styled.div`
  display: flex;
  flex: none;
  flex-direction: column;
  align-items: center;
  gap: 3px;
  width: 9px;
  padding-top: 1px;
  background: #cdcdcd;
`;

const VerticalThumb = styled.div`
  width: 6px;
  height: 47.4%;
  border-radius: 3px;
  background: #808080;
`;

const SplitMark = styled.span<{ $vertical?: boolean }>`
  flex: none;
  width: ${(p) => (p.$vertical ? 1 : 6)}px;
  height: ${(p) => (p.$vertical ? 6 : 1)}px;
  background: #333;
`;

const HorizontalTrack = styled.div`
  display: flex;
  flex: none;
  align-items: center;
  justify-content: space-between;
  height: 10px;
  margin-right: 9px;
  padding: 0 2px;
  background: #cdcdcd;
`;

const HorizontalThumb = styled.div`
  width: 47.4%;
  height: 6px;
  border-radius: 3px;
  background: #7f8280;
`;

const TabBar = styled.div`
  display: flex;
  flex: none;
  align-items: center;
  height: 16px;
  padding-left: 5px;
  font-size: 8px;
`;

const TabNav = styled.button`
  display: flex;
  width: 16px;
  height: 16px;
  align-items: center;
  justify-content: center;
`;

const AddTab = styled.button`
  margin: 0 6px 0 4px;
`;

const Tab = styled.button<{ $active?: boolean }>`
  height: 16px;
  padding: 0 9px;
  border-bottom: 2px solid ${(p) => (p.$active ? "#8c8c8c" : "transparent")};
  background: ${(p) => (p.$active ? "#fff" : "transparent")};
  line-height: 12px;
  font-weight: ${(p) => (p.$active ? 700 : 400)};
`;

const TabDivider = styled.span`
  width: 1px;
  height: 9px;
  background: #b4b2b0;
`;

const navPaths = [
  "M1.5 1v10M12 1L5 6l7 5zM9 4.5L7 6l2 1.5M4 3v6",
  "M6 2L2 6l4 4zM12 2L8 6l4 4z",
  "M1 2l4 4-4 4zM7 2l4 4-4 4z",
  "M11.5 1v10M1 1l7 5-7 5zM4 4.5L6 6 4 7.5M9 3v6",
];

const Sidebar = styled.aside`
  position: relative;
  display: flex;
  flex: none;
  flex-direction: column;
  align-items: center;
  gap: 13px;
  width: 39px;
  padding-top: 8px;
  border-left: 1px solid #d8d6d4;
`;

const SideButton = styled.button`
  display: flex;
  width: 16px;
  height: 16px;
`;

const SideHandle = styled.button`
  position: absolute;
  left: -1px;
  top: 46%;
  display: flex;
  align-items: center;
  width: 5px;
  height: 50px;
  background: #929292;
`;

const StatusBar = styled.footer`
  display: flex;
  flex: none;
  align-items: stretch;
  height: 17px;
  border-top: 1px solid #d0cecc;
  font-size: 8px;
`;

const StatusCell = styled.div<{ $width?: number; $center?: boolean }>`
  display: flex;
  flex: ${(p) => (p.$width ? `0 1 ${p.$width}px` : "1")};
  align-items: center;
  justify-content: ${(p) => (p.$center ? "center" : "flex-start")};
  gap: 7px;
  padding-left: ${(p) => (p.$center ? 0 : 6)}px;
  border-right: 1px solid #e4e2e0;
  white-space: nowrap;
`;

const DocCell = styled(StatusCell)`
  padding-left: 4px;
`;

const ZoomCell = styled(StatusCell)`
  gap: 1px;
  padding-left: 4px;
`;

const ZoomButton = styled.button`
  display: flex;
  padding: 2px;
`;

const ZoomSlider = styled.input`
  appearance: none;
  width: 66px;
  height: 8px;
  background: linear-gradient(#8c8c8c, #8c8c8c) center / 100% 1px no-repeat;
  &::-webkit-slider-thumb {
    appearance: none;
    width: 3px;
    height: 8px;
    border: 1px solid #555;
    background: #f6f5f4;
  }
`;

const ZoomValue = styled.div`
  display: flex;
  align-items: center;
  padding: 0 7px 0 5px;
`;

const menus = ["File", "Edit", "View", "Insert", "Format", "Styles", "Sheet", "Data", "Tools", "Window", "Help"];

export default function App() {
  return (
    <Window>
      <GlobalStyle />
      <MenuBar>
        {menus.map((name) => (
          <button key={name}>{name}</button>
        ))}
        <CloseButton aria-label="Close document">
          <Svg width="6" height="6" viewBox="0 0 6 6" aria-hidden="true">
            <path d="M.5 .5l5 5M5.5 .5l-5 5" stroke="#222" strokeWidth="1.6" />
          </Svg>
        </CloseButton>
      </MenuBar>
      <Toolbar role="toolbar" aria-label="Standard">
        <Tools items={standardTools} />
      </Toolbar>
      <FormatBar role="toolbar" aria-label="Formatting">
        <ComboBox label="Font name" value="Calibri" width={138} italic />
        <ComboBox label="Font size" value="16 pt" width={68} />
        <ToolRun>
          <Tools items={formatTools} />
        </ToolRun>
      </FormatBar>
      <Body>
        <Main>
          <FormulaBar>
            <ComboBox label="Name box" value="A1:F1" width={108} />
            <FormulaTools>
              <SlimButton $width={16} aria-label="Function Wizard"><FxIcon size={14} /></SlimButton>
              <SlimButton $width={16} aria-label="Select Function"><Icon name="sigma" /></SlimButton>
              <SlimButton $width={8} aria-label="Function list"><Caret size={5} /></SlimButton>
              <SlimButton $width={16} aria-label="Formula"><Icon name="equals" /></SlimButton>
            </FormulaTools>
            <FormulaInput aria-label="Input line" defaultValue="Dashboard - Ventilatieoverzicht" />
            <SlimButton $width={12} aria-label="Expand Formula Bar"><Caret size={7} /></SlimButton>
          </FormulaBar>
          <SheetArea>
            <Grid>
              <SheetTable>
                <colgroup>
                  <col width={headWidth} />
                  {columns.map(([name, width]) => (
                    <col key={name} width={width} />
                  ))}
                  <col />
                </colgroup>
                <thead>
                  <Row $height={14}>
                    <Corner aria-label="Select all" />
                    {columns.map(([name], i) => (
                      <HeadCell key={name} scope="col" $selected={i < 6}>{name}</HeadCell>
                    ))}
                    <HeadCell />
                  </Row>
                </thead>
                <tbody>
                  {Array.from({ length: 37 }, (_, i) => (
                    <SheetRow key={i} n={i + 1} />
                  ))}
                </tbody>
              </SheetTable>
              <ChartObject $x={22} $y={192}><ColumnChart /></ChartObject>
              <ChartObject $x={569} $y={192}><PieChart /></ChartObject>
              <ChartObject $x={22} $y={426}><BarChart /></ChartObject>
            </Grid>
            <VerticalTrack>
              <SplitMark />
              <VerticalThumb />
            </VerticalTrack>
          </SheetArea>
          <HorizontalTrack>
            <HorizontalThumb />
            <SplitMark $vertical />
          </HorizontalTrack>
          <TabBar>
            {navPaths.map((d, i) => (
              <TabNav key={d} aria-label={["First sheet", "Previous sheet", "Next sheet", "Last sheet"][i]}>
                <Svg width="13" height="12" viewBox="0 0 13 12" aria-hidden="true">
                  <path d={d} stroke="#cfcdcb" />
                </Svg>
              </TabNav>
            ))}
            <AddTab aria-label="Add sheet"><Icon name="addSheet" /></AddTab>
            <Tab>Ventilatieberekening</Tab>
            <TabDivider />
            <Tab>Normen</Tab>
            <TabDivider />
            <Tab $active>Dashboard</Tab>
            <Tab>Instructies</Tab>
            <TabDivider />
          </TabBar>
        </Main>
        <Sidebar>
          <SideButton aria-label="Sidebar settings"><Icon name="menu" /></SideButton>
          <SideButton aria-label="Properties"><Icon name="properties" /></SideButton>
          <SideButton aria-label="Styles"><Icon name="styles" /></SideButton>
          <SideButton aria-label="Gallery"><Icon name="gallery" /></SideButton>
          <SideButton aria-label="Navigator"><Icon name="navigator" /></SideButton>
          <SideButton aria-label="Functions"><FxIcon /></SideButton>
          <SideHandle aria-label="Hide sidebar">
            <Svg width="4" height="6" viewBox="0 0 4 6" aria-hidden="true">
              <path d="M0 0l4 3-4 3z" fill="#fff" />
            </Svg>
          </SideHandle>
        </Sidebar>
      </Body>
      <StatusBar>
        <DocCell $width={172}><Icon name="statusSave" />Sheet 3 of 4</DocCell>
        <StatusCell $width={216}>Selected: 1 row, 6 columns</StatusCell>
        <StatusCell $width={229}>PageStyle_Dashboard</StatusCell>
        <StatusCell $width={162} $center>English (USA)</StatusCell>
        <StatusCell $width={46} />
        <StatusCell $width={30}>
          <Svg width="18" height="12" viewBox="0 0 18 12" aria-hidden="true">
            <path d="M.5 3.5h11v6H.5z" stroke={blue} />
            <path d="M14 .5h5M14 11.5h5M16.5 .5v11" stroke={ink} />
          </Svg>
        </StatusCell>
        <StatusCell $width={20} />
        <StatusCell $width={20} />
        <StatusCell $center>Average: ; Sum: 0</StatusCell>
        <ZoomCell $width={96}>
          <ZoomButton aria-label="Zoom out">
            <Svg width="7" height="7" viewBox="0 0 7 7" aria-hidden="true"><path d="M0 3.5h7" stroke="#222" strokeWidth="1.5" /></Svg>
          </ZoomButton>
          <ZoomSlider type="range" aria-label="Zoom" min="0" max="100" defaultValue="48" />
          <ZoomButton aria-label="Zoom in">
            <Svg width="7" height="7" viewBox="0 0 7 7" aria-hidden="true"><path d="M0 3.5h7M3.5 0v7" stroke="#222" strokeWidth="1.5" /></Svg>
          </ZoomButton>
        </ZoomCell>
        <ZoomValue>100%</ZoomValue>
      </StatusBar>
    </Window>
  );
}
